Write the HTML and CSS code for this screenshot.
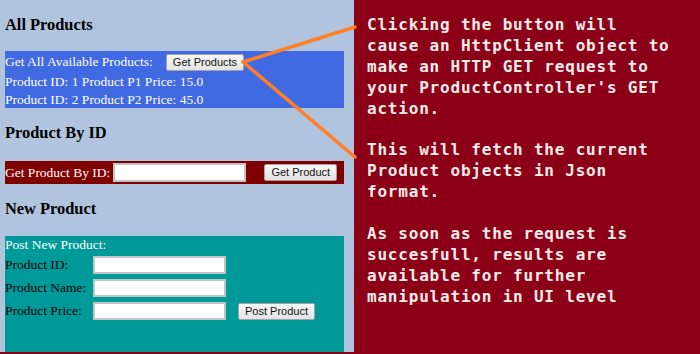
FILE: index.html
```html
<!DOCTYPE html>
<html>
<head>
<meta charset="utf-8">
<link rel="stylesheet" href="styles.css">
</head>
<body>
<div class="page">
  <div class="left">
    <h3 class="heading">All Products</h3>
    <div class="box box-blue">
      <div class="row-first">
        <span>Get All Available Products:</span>
        <button class="btn btn-products">Get Products</button>
      </div>
      <div class="line">Product ID: 1 Product P1 Price: 15.0</div>
      <div class="line">Product ID: 2 Product P2 Price: 45.0</div>
    </div>

    <h3 class="heading heading-id">Product By ID</h3>
    <div class="box box-red">
      <span>Get Product By ID:</span>
      <input class="field field-id" type="text">
      <button class="btn btn-product">Get Product</button>
    </div>

    <h3 class="heading heading-new">New Product</h3>
    <div class="box box-teal">
      <div class="line line-white">Post New Product:</div>
      <div class="form-row">
        <span class="label">Product ID:</span>
        <input class="field" type="text">
      </div>
      <div class="form-row">
        <span class="label">Product Name:</span>
        <input class="field" type="text">
      </div>
      <div class="form-row">
        <span class="label">Product Price:</span>
        <input class="field" type="text">
        <button class="btn btn-post">Post Product</button>
      </div>
    </div>
  </div>
  <div class="right">
    <p class="note">Clicking the button will<br>cause an HttpClient object to<br>make an HTTP GET request to<br>your ProductController's GET<br>action.</p>
    <p class="note">This will fetch the current<br>Product objects in Json<br>format.</p>
    <p class="note">As soon as the request is<br>succesfull, results are<br>available for further<br>manipulation in UI level</p>
  </div>
  <svg class="arrows" width="700" height="354" viewBox="0 0 700 354">
    <line x1="243" y1="62" x2="355" y2="27" stroke="#ff7f27" stroke-width="3.5" stroke-linecap="round"/>
    <line x1="243" y1="62" x2="355" y2="157" stroke="#ff7f27" stroke-width="3.5" stroke-linecap="round"/>
  </svg>
</div>
</body>
</html>
```

FILE: styles.css
```css
html, body {
  margin: 0;
  padding: 0;
}

body {
  width: 700px;
  height: 354px;
  overflow: hidden;
  background: #8b0016;
  font-family: "Liberation Serif", "Times New Roman", serif;
  font-size: 13.5px;
}

.page {
  position: relative;
  display: flex;
  width: 700px;
  height: 354px;
}

.left {
  width: 344px;
  height: 352px;
  padding-left: 5px;
  padding-right: 5px;
  background: #b0c4de;
  box-sizing: content-box;
  overflow: hidden;
}

.heading {
  margin: 15px 0 16px;
  font-size: 16.4px;
  line-height: 20px;
  font-weight: bold;
  color: #000;
}

.heading-id {
  margin-bottom: 18px;
}

.heading-new {
  margin-top: 15px;
  margin-bottom: 17px;
}

.box {
  width: 339px;
  color: #fff;
}

.box-blue {
  background: #4169e1;
  height: 57px;
}

.row-first {
  display: flex;
  align-items: center;
  height: 22px;
}

.btn-products {
  margin-left: 13px;
}

.line {
  line-height: 17.5px;
  white-space: nowrap;
}

.box-red {
  background: #800000;
  height: 23px;
  display: flex;
  align-items: center;
}

.field {
  width: 133px;
  height: 18px;
  box-sizing: border-box;
  border: 2px solid #c4c4c4;
  background: #fff;
  padding: 0 2px;
  margin: 0;
  font-size: 12px;
}

.field-id {
  height: 19px;
  margin-left: 3px;
}

.btn {
  font-family: "Liberation Sans", Arial, sans-serif;
  font-size: 11px;
  line-height: 15px;
  height: 17px;
  padding: 0 6px;
  margin-top: 0;
  margin-bottom: 0;
  border: 1px solid #a3a3a3;
  border-radius: 2px;
  background: linear-gradient(#f7f7f7, #e3e3e3);
  color: #111;
  box-sizing: border-box;
  white-space: nowrap;
}

.btn-product {
  margin-left: 18px;
}

.box-teal {
  background: #009999;
  height: 117px;
  color: #000;
}

.line-white {
  color: #fff;
}

.form-row {
  display: flex;
  align-items: center;
  height: 23px;
}

.label {
  width: 88px;
  flex: none;
  white-space: nowrap;
}

.btn-post {
  margin-left: 12px;
}

.right {
  flex: 1;
  padding: 15px 0 0 13px;
  color: #fbecec;
  font-family: "DejaVu Sans Mono", "Liberation Mono", monospace;
  font-weight: bold;
  font-size: 16px;
  letter-spacing: 0.8px;
  line-height: 20.9px;
}

.note {
  margin: 0 0 20.9px;
  white-space: nowrap;
}

.arrows {
  position: absolute;
  left: 0;
  top: 0;
  pointer-events: none;
}
```
